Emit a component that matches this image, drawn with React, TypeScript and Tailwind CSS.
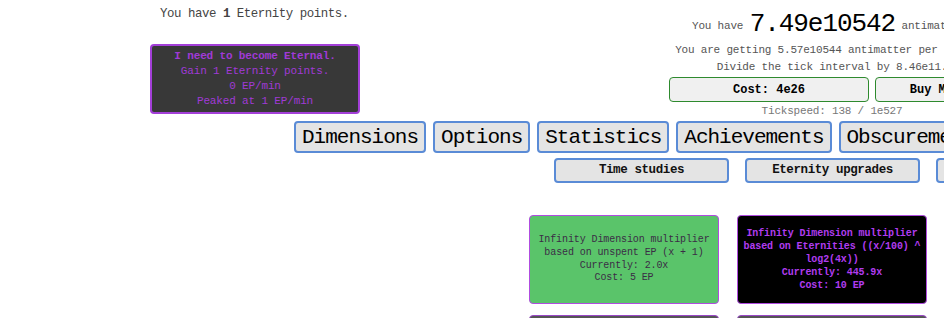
export default function App() {
  const mono = { fontFamily: '"Liberation Mono", "DejaVu Sans Mono", monospace' };

  const tabs = ["Dimensions", "Options", "Statistics", "Achievements", "Obscurements"];
  const subtabs = ["Time studies", "Eternity upgrades", "Eternity milestones"];

  return (
    <div className="w-[944px] h-[318px] overflow-hidden bg-white" style={mono}>
      <div className="w-[1400px]">

        {/* Header */}
        <div className="flex h-[121px]">
          {/* Left: eternity points */}
          <div className="ml-[150px] w-[210px] shrink-0">
            <p className="pl-[10px] pt-[5px] text-[12.4px] tracking-[-0.45px] leading-[18px] text-[#444]">
              You have <span className="font-bold">1</span> Eternity points.
            </p>
            <div className="mt-[21px] h-[70px] border-2 border-[#a33fd8] bg-[#383838] rounded-[4px] flex flex-col items-center justify-center text-[11px] tracking-[-0.15px] leading-[14.8px] text-[#a03ad6]">
              <span className="font-bold">I need to become Eternal.</span>
              <span>Gain 1 Eternity points.</span>
              <span>0 EP/min</span>
              <span>Peaked at 1 EP/min</span>
            </div>
          </div>

          {/* Right: antimatter + tickspeed */}
          <div className="ml-[272px] w-[400px] shrink-0 flex flex-col items-center">
            <p className="pt-[9px] h-[42px] text-[11px] tracking-[-0.2px] text-[#555] whitespace-nowrap leading-[30px]">
              You have{" "}
              <span className="text-[26px] tracking-[-1.05px] text-black align-[-2px]">7.49e10542</span>{" "}
              antimatter.
            </p>
            <p className="text-[11px] tracking-[-0.2px] leading-[17px] text-[#555] whitespace-nowrap">
              You are getting 5.57e10544 antimatter per second.
            </p>
            <p className="text-[11px] tracking-[-0.2px] leading-[17px] text-[#555] whitespace-nowrap">
              Divide the tick interval by 8.46e11.
            </p>
            <div className="flex gap-[6px] mt-[1px]">
              <button className="w-[200px] h-[25px] border border-[#2e8a2e] rounded-[4px] bg-[#f0f0f0] text-[12px] font-bold text-black">
                Cost: 4e26
              </button>
              <button className="w-[120px] h-[25px] border border-[#2e8a2e] rounded-[4px] bg-[#f0f0f0] text-[12px] font-bold text-black">
                Buy Max
              </button>
            </div>
            <p className="mt-[2px] text-[11px] tracking-[-0.2px] leading-[14px] text-[#777] whitespace-nowrap">
              Tickspeed: 138 / 1e527
            </p>
          </div>
        </div>

        {/* Main tabs */}
        <div className="flex gap-[7px] ml-[294px]">
          {tabs.map((t) => (
            <button
              key={t}
              className="h-[32px] px-[6px] border-2 border-[#5a8bd6] rounded-[4px] bg-[#e4e4e4] text-[21px] tracking-[-1px] text-black leading-none"
            >
              {t}
            </button>
          ))}
        </div>

        {/* Sub tabs */}
        <div className="flex gap-[16px] ml-[554px] mt-[5px]">
          {subtabs.map((t) => (
            <button
              key={t}
              className="w-[175px] h-[25px] border-2 border-[#5a8bd6] rounded-[4px] bg-[#e4e4e4] text-[12.5px] tracking-[-0.4px] font-bold text-[#111] leading-none"
            >
              {t}
            </button>
          ))}
        </div>

        {/* Eternity upgrades */}
        <div className="ml-[529px] mt-[32px] flex flex-col gap-[11px]">
          <div className="flex gap-[18px]">
            <div className="w-[190px] h-[89px] border border-[#b04ce0] rounded-[4px] bg-[#5ac46a] flex flex-col items-center justify-center text-center text-[10px] tracking-[-0.1px] leading-[12.9px] text-[#3a2d46]">
              <span>Infinity Dimension multiplier</span>
              <span>based on unspent EP (x + 1)</span>
              <span>Currently: 2.0x</span>
              <span>Cost: 5 EP</span>
            </div>
            <div className="w-[190px] h-[89px] border border-[#b04ce0] rounded-[4px] bg-black flex flex-col items-center justify-center text-center text-[10px] tracking-[-0.1px] leading-[13px] font-bold text-[#b13cf0]">
              <span>Infinity Dimension multiplier</span>
              <span>based on Eternities ((x/100) ^</span>
              <span>log2(4x))</span>
              <span>Currently: 445.9x</span>
              <span>Cost: 10 EP</span>
            </div>
            <div className="w-[190px] h-[89px] border border-[#b04ce0] rounded-[4px] bg-black" />
          </div>
          <div className="flex gap-[18px]">
            <div className="w-[190px] h-[89px] border border-[#9a48c8] rounded-[4px] bg-[#555]" />
            <div className="w-[190px] h-[89px] border border-[#9a48c8] rounded-[4px] bg-[#555]" />
            <div className="w-[190px] h-[89px] border border-[#9a48c8] rounded-[4px] bg-[#555]" />
          </div>
        </div>

      </div>
    </div>
  );
}
